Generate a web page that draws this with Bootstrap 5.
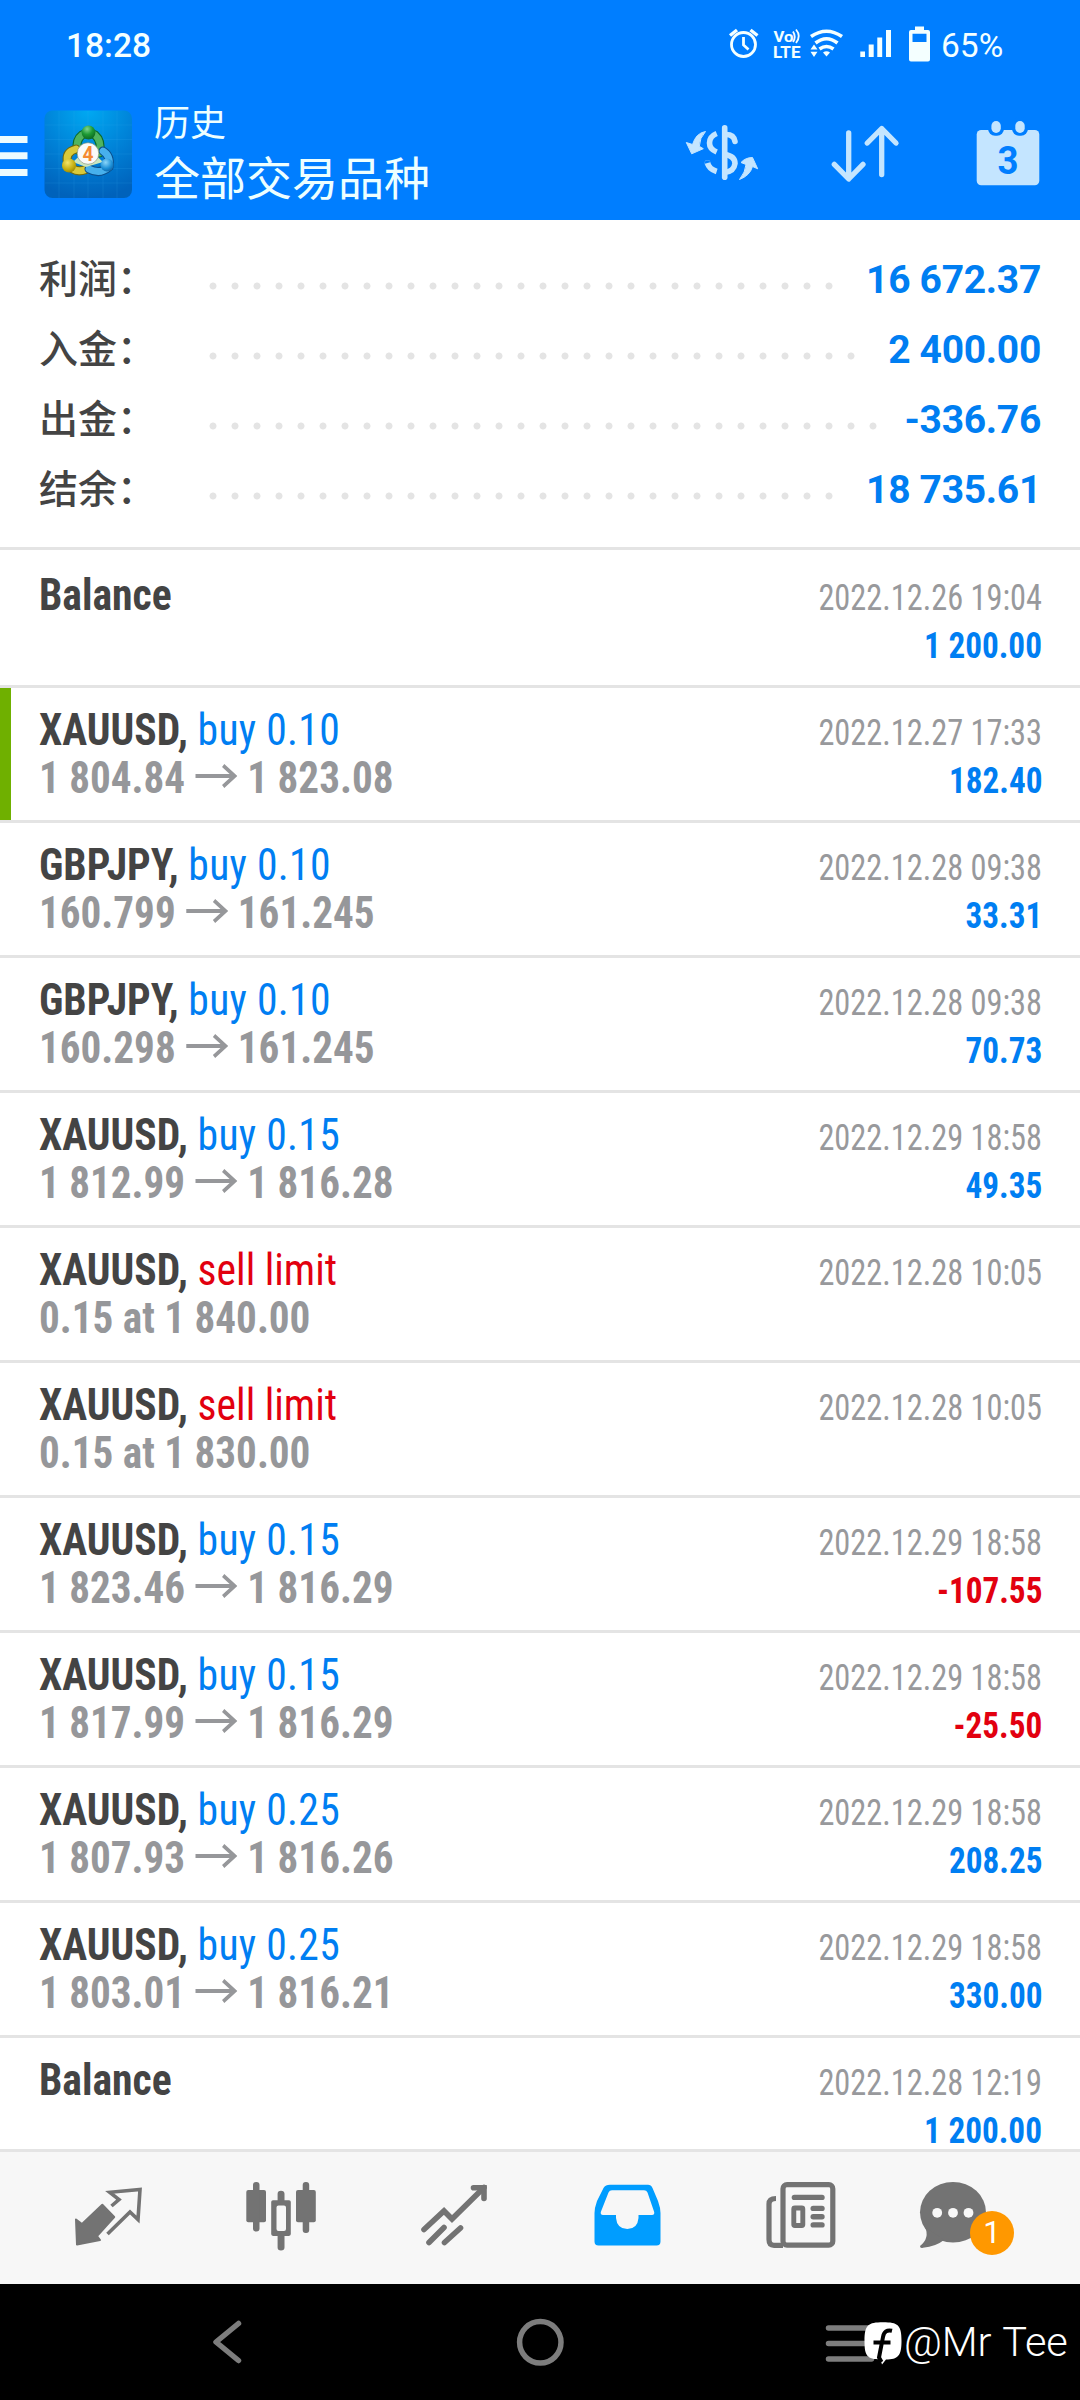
<!DOCTYPE html>
<html lang="zh-CN">
<head>
<meta charset="utf-8">
<meta name="viewport" content="width=device-width, initial-scale=1">
<title>历史</title>
<link rel="stylesheet" href="https://cdn.jsdelivr.net/npm/bootstrap@5.3.0/dist/css/bootstrap.min.css">
<style>
  body { font-family: Roboto, "Noto Sans CJK SC", sans-serif; width: 1080px; height: 2400px; overflow: hidden; background: #fff; }
  svg { display: block; flex: none; }
  .top-area { background: #007eff; height: 220px; }
  .status-bar { height: 88px; color: #f4ffff; font-size: 33.5px; font-weight: 500; line-height: 92px; padding-left: 66px; }
  .battery-text { width: 139px; font-weight: 450; }
  .app-bar { height: 132px; }
  .titles { color: #edffff; font-family: "Noto Sans CJK SC", sans-serif; margin-left: 22px; padding-top: 10px; }
  .title-sub { font-size: 36px; line-height: 44px; }
  .title-main { font-size: 46px; line-height: 60px; margin-top: 3px; }
  .summary { height: 327px; padding: 23px 39px 0 39px; }
  .sum-line { height: 70px; }
  .sum-label { width: 163px; font-family: "Noto Sans CJK SC", sans-serif; font-weight: 500; font-size: 39px; line-height: 66px; margin-bottom: 4px; color: #444; }
  .leader { height: 8px; margin-top: 16px; background: radial-gradient(circle at 11px 4px, #e4e4e4 3.1px, transparent 3.9px) 0 0 / 22px 8px repeat-x; }
  .dots-29 { width: 638px; } .dots-30 { width: 660px; } .dots-31 { width: 682px; }
  .sum-value { color: #007ef2; font-weight: 700; font-size: 39px; line-height: 70px; padding-top: 3px; letter-spacing: -.3px; white-space: pre; }
  .history { height: 1602px; overflow: hidden; }
  .deal { height: 135px; border-top: 3px solid #e4e4e4; padding: 18px 38px 0 39px; font-stretch: 75%; position: relative; }
  .deal-first { height: 138px; padding-top: 21px; }
  .deal-marked::before { content: ""; position: absolute; left: 0; top: 0; width: 11px; height: 132px; background: #6fb000; }
  .deal-line { height: 48px; line-height: 48px; white-space: pre; }
  .deal-line > span { display: inline-block; }
  .lead-text { font-size: 45px; transform: scaleX(.925); transform-origin: left; color: #444; font-weight: 700; }
  .lead-text .dir { font-weight: 400; letter-spacing: .3px; }
  .lead-text .sell-c { letter-spacing: 0; }
  .prices { color: #96979a; transform: scaleX(.914); }
  .prices svg { display: inline-block; vertical-align: 5px; margin: 0 11px; }
  .buy-c { color: #007ef2; } .sell-c { color: #e2000f; }
  .stamp { font-size: 36px; color: #98999c; transform: scaleX(.898); transform-origin: right; }
  .amount { font-size: 36px; font-weight: 700; transform: scaleX(.922); transform-origin: right; }
  .amount-alone { padding-top: 3px; }
  .tabs { height: 135px; border-top: 3px solid #e4e4e4; background: #f7f7f7; padding: 0 21px; color: #737373; }
  .tab-cell { position: relative; width: 173px; }
  .count-badge { left: 84px; top: 59px; width: 44px; height: 44px; border-radius: 50%; background: #ff9800; color: #fff; font-size: 31px; line-height: 44px; }
  .sys-nav { height: 116px; background: #000; position: relative; }
  .credit { left: 864px; top: 34px; color: #fff; }
  .credit span { font-size: 41.5px; font-weight: 350; line-height: 47px; margin-left: 2px; word-spacing: 2px; letter-spacing: -.2px; white-space: pre; }
</style>
</head>
<body>
<svg width="0" height="0" class="position-absolute">
  <symbol id="arrow" viewBox="0 0 46 24"><path d="M0 12H43M30.500 1.500L43 12L30.500 22.500" fill="none" stroke="#96979a" stroke-width="3.900"/></symbol>
</svg>

<header class="top-area">
  <div class="status-bar d-flex justify-content-between">
    <span>18:28</span>
    <div class="d-flex">
      <svg width="221" height="88" viewBox="720 0 221 88" fill="#f4ffff">
        <g fill="none" stroke="#f4ffff" stroke-width="2.800">
          <circle cx="743.500" cy="44.500" r="12"/><path d="M730 35.500L737 30M757.500 35.500L750.500 30" stroke-width="3.400"/><path d="M743.500 37V45L748.500 49.500"/>
        </g>
        <text x="773.500" y="42" font-size="14.500" font-weight="700" textLength="20" lengthAdjust="spacingAndGlyphs">Vo</text>
        <text x="773" y="57.500" font-size="16.500" font-weight="700" textLength="27.500" lengthAdjust="spacingAndGlyphs">LTE</text>
        <path d="M793 31.500Q796.500 37 793 42M796 29.500Q801.500 36 796 43" fill="none" stroke="#f4ffff" stroke-width="1.800"/>
        <g fill="none" stroke="#f4ffff" stroke-width="3.600"><path d="M811 36.500Q826.500 26 842 36.500"/><path d="M815.500 43Q826.500 34.500 837.500 43"/><path d="M819.500 49Q826.500 44 833.500 49"/></g>
        <path d="M823 52.500Q826.500 50 830 52.500L826.500 56.500ZM810.500 49.500L814 44.500L817.500 49.500ZM810.500 51.800H817.500L814 57Z"/>
        <path d="M860.300 51.500h4.700V57h-4.700zM868.700 44.500h5V57h-5zM877.300 37.500h4.900V57h-4.900zM886 30h5v27h-5z"/>
        <path fill-rule="evenodd" d="M911 30h4v-3.500h9V30h4q2 0 2 2v27.500q0 2-2 2h-17q-2 0-2-2V32q0-2 2-2zM912.500 33.700v8.400h14v-8.400z"/>
      </svg>
      <span class="battery-text">65%</span>
    </div>
  </div>
  <div class="app-bar d-flex">
    <svg width="132" height="132" viewBox="0 88 132 132">
      <defs>
        <radialGradient id="tile" cx=".5" cy="0" r="1"><stop offset="0" stop-color="#00a9f2"/><stop offset=".55" stop-color="#0080d6"/><stop offset="1" stop-color="#0062bb"/></radialGradient>
        <radialGradient id="gr" cx=".4" cy=".25" r=".8"><stop offset="0" stop-color="#7fd48c"/><stop offset=".5" stop-color="#1d9a35"/><stop offset="1" stop-color="#0b6320"/></radialGradient>
        <radialGradient id="ye" cx=".4" cy=".3" r=".8"><stop offset="0" stop-color="#f3e56a"/><stop offset=".6" stop-color="#c4ae10"/><stop offset="1" stop-color="#8d7c00"/></radialGradient>
        <radialGradient id="bl" cx=".4" cy=".3" r=".8"><stop offset="0" stop-color="#8ad6fa"/><stop offset=".6" stop-color="#1c8fd6"/><stop offset="1" stop-color="#0a5a9d"/></radialGradient>
      </defs>
      <path d="M0 136h27.500v7H0zM0 152.300h27.500v7H0zM0 169h27.500v7H0z" fill="#edfbff"/>
      <rect x="44.500" y="110.500" width="87.500" height="87.500" rx="8" fill="url(#tile)"/>
      <path d="M59 111v87M74 111v87M88 111v87M103 111v87M117 111v87M45 125h87M45 139.500h87M45 154h87M45 168.500h87M45 183h87" stroke="#3cb4f5" stroke-opacity=".15"/>
      <g fill="none" stroke-linecap="round">
        <path d="M77.500 150Q75.500 140 82 135Q88 131 95 135Q102 141 99.500 153" stroke="#0b6a2a" stroke-width="9"/>
        <path d="M77.500 150Q75.500 140 82 135Q88 131 95 135Q102 141 99.500 153" stroke="#4fb45f" stroke-width="6.800"/>
        <path d="M76 149Q65 152 67.500 163Q74 174 86 169.500" stroke="#6f6a10" stroke-width="9"/>
        <path d="M76 149Q65 152 67.500 163Q74 174 86 169.500" stroke="#d8c93a" stroke-width="6.800"/>
        <path d="M103 151Q111 156 109 167Q100 175 89 169" stroke="#0b4f8d" stroke-width="9"/>
        <path d="M103 151Q111 156 109 167Q100 175 89 169" stroke="#47b0ec" stroke-width="6.800"/>
      </g>
      <path d="M73 162L86 167L103 162L88 148Z" fill="#c9e6c0"/>
      <circle cx="88.500" cy="132.500" r="6.900" fill="url(#gr)"/><circle cx="69" cy="165.500" r="7" fill="url(#ye)"/><circle cx="107" cy="165" r="6.500" fill="url(#bl)"/>
      <circle cx="88" cy="153.500" r="10.800" fill="#fafafa" stroke="#7a8a6a" stroke-width=".6"/>
      <text x="88" y="161" font-size="20.500" font-weight="700" text-anchor="middle" textLength="11" lengthAdjust="spacingAndGlyphs" fill="#f58a33">4</text>
    </svg>
    <div class="titles flex-grow-1">
      <div class="title-sub">历史</div>
      <div class="title-main">全部交易品种</div>
    </div>
    <svg width="144" height="132" viewBox="648 88 144 132">
      <g fill="none" stroke="#c4e5ff" stroke-width="5.600">
        <path d="M724.700 127.700V177.300" stroke-linecap="round"/>
        <path d="M726 134.500Q734 134.500 735 141.500" stroke-linecap="round"/>
        <path d="M716.700 133.500Q709.500 136.500 709.500 143Q709.500 149 716.700 152"/>
        <path d="M724.700 154.500Q735 156 735 163.500Q734 171.500 724.700 172.500"/>
        <path d="M707.500 163Q709 169 716.700 171.500" /><circle cx="707.500" cy="163" r=".1" stroke-linecap="round"/>
      </g>
      <path d="M705.500 131.500Q696 133 692.500 144.500L686.300 142.500L691.700 153.800L703.300 148.700L699.300 146.300Q699.500 138 705.500 131.500Z" fill="#c4e5ff" stroke="#c4e5ff" stroke-linejoin="round"/>
      <path d="M739.500 179.500Q750 175.500 752.500 166.500L757.700 168.800L752.500 157.500Q745.500 157.500 741 162.500L746 164.500Q745.500 172 739.500 179.500Z" fill="#c4e5ff" stroke="#c4e5ff" stroke-linejoin="round"/>
    </svg>
    <svg width="144" height="132" viewBox="792 88 144 132">
      <path d="M848.700 133V178.500M834.300 164.300L848.700 179L863 164.300M881.700 174.500V129M867.300 143L881.700 128.500L896 143" fill="none" stroke="#c4e5ff" stroke-width="5.300" stroke-linecap="round" stroke-linejoin="round"/>
    </svg>
    <svg width="144" height="132" viewBox="936 88 144 132">
      <rect x="976.700" y="130" width="62.600" height="55.300" rx="4.500" fill="#c4e5ff"/>
      <rect x="988" y="117" width="16" height="18.700" rx="7" fill="#007eff"/><rect x="1012" y="117" width="16" height="18.700" rx="7" fill="#007eff"/>
      <rect x="991.400" y="121" width="9.400" height="12" rx="4.700" fill="#c4e5ff"/><rect x="1015.300" y="121" width="9.400" height="12" rx="4.700" fill="#c4e5ff"/>
      <text x="1008" y="173.500" font-size="39" font-weight="700" text-anchor="middle" textLength="21" lengthAdjust="spacingAndGlyphs" fill="#007eff">3</text>
    </svg>
  </div>
</header>

<section class="summary">
  <div class="sum-line d-flex align-items-center"><span class="sum-label">利润：</span><span class="leader dots-29"></span><span class="sum-value ms-auto">16 672.37</span></div>
  <div class="sum-line d-flex align-items-center"><span class="sum-label">入金：</span><span class="leader dots-30"></span><span class="sum-value ms-auto">2 400.00</span></div>
  <div class="sum-line d-flex align-items-center"><span class="sum-label">出金：</span><span class="leader dots-31"></span><span class="sum-value ms-auto">-336.76</span></div>
  <div class="sum-line d-flex align-items-center"><span class="sum-label">结余：</span><span class="leader dots-29"></span><span class="sum-value ms-auto">18 735.61</span></div>
</section>

<main class="history">
  <article class="deal deal-first">
    <div class="deal-line d-flex justify-content-between align-items-baseline"><span class="lead-text">Balance</span><span class="stamp">2022.12.26 19:04</span></div>
    <div class="deal-line d-flex justify-content-end align-items-baseline"><span class="amount amount-alone buy-c">1 200.00</span></div>
  </article>
  <article class="deal deal-marked">
    <div class="deal-line d-flex justify-content-between align-items-baseline"><span class="lead-text">XAUUSD, <span class="dir buy-c">buy 0.10</span></span><span class="stamp">2022.12.27 17:33</span></div>
    <div class="deal-line d-flex justify-content-between align-items-baseline"><span class="lead-text prices">1 804.84<svg width="46" height="24"><use href="#arrow"/></svg>1 823.08</span><span class="amount buy-c">182.40</span></div>
  </article>
  <article class="deal">
    <div class="deal-line d-flex justify-content-between align-items-baseline"><span class="lead-text">GBPJPY, <span class="dir buy-c">buy 0.10</span></span><span class="stamp">2022.12.28 09:38</span></div>
    <div class="deal-line d-flex justify-content-between align-items-baseline"><span class="lead-text prices">160.799<svg width="46" height="24"><use href="#arrow"/></svg>161.245</span><span class="amount buy-c">33.31</span></div>
  </article>
  <article class="deal">
    <div class="deal-line d-flex justify-content-between align-items-baseline"><span class="lead-text">GBPJPY, <span class="dir buy-c">buy 0.10</span></span><span class="stamp">2022.12.28 09:38</span></div>
    <div class="deal-line d-flex justify-content-between align-items-baseline"><span class="lead-text prices">160.298<svg width="46" height="24"><use href="#arrow"/></svg>161.245</span><span class="amount buy-c">70.73</span></div>
  </article>
  <article class="deal">
    <div class="deal-line d-flex justify-content-between align-items-baseline"><span class="lead-text">XAUUSD, <span class="dir buy-c">buy 0.15</span></span><span class="stamp">2022.12.29 18:58</span></div>
    <div class="deal-line d-flex justify-content-between align-items-baseline"><span class="lead-text prices">1 812.99<svg width="46" height="24"><use href="#arrow"/></svg>1 816.28</span><span class="amount buy-c">49.35</span></div>
  </article>
  <article class="deal">
    <div class="deal-line d-flex justify-content-between align-items-baseline"><span class="lead-text">XAUUSD, <span class="dir sell-c">sell limit</span></span><span class="stamp">2022.12.28 10:05</span></div>
    <div class="deal-line d-flex justify-content-between align-items-baseline"><span class="lead-text prices">0.15 at 1 840.00</span></div>
  </article>
  <article class="deal">
    <div class="deal-line d-flex justify-content-between align-items-baseline"><span class="lead-text">XAUUSD, <span class="dir sell-c">sell limit</span></span><span class="stamp">2022.12.28 10:05</span></div>
    <div class="deal-line d-flex justify-content-between align-items-baseline"><span class="lead-text prices">0.15 at 1 830.00</span></div>
  </article>
  <article class="deal">
    <div class="deal-line d-flex justify-content-between align-items-baseline"><span class="lead-text">XAUUSD, <span class="dir buy-c">buy 0.15</span></span><span class="stamp">2022.12.29 18:58</span></div>
    <div class="deal-line d-flex justify-content-between align-items-baseline"><span class="lead-text prices">1 823.46<svg width="46" height="24"><use href="#arrow"/></svg>1 816.29</span><span class="amount sell-c">-107.55</span></div>
  </article>
  <article class="deal">
    <div class="deal-line d-flex justify-content-between align-items-baseline"><span class="lead-text">XAUUSD, <span class="dir buy-c">buy 0.15</span></span><span class="stamp">2022.12.29 18:58</span></div>
    <div class="deal-line d-flex justify-content-between align-items-baseline"><span class="lead-text prices">1 817.99<svg width="46" height="24"><use href="#arrow"/></svg>1 816.29</span><span class="amount sell-c">-25.50</span></div>
  </article>
  <article class="deal">
    <div class="deal-line d-flex justify-content-between align-items-baseline"><span class="lead-text">XAUUSD, <span class="dir buy-c">buy 0.25</span></span><span class="stamp">2022.12.29 18:58</span></div>
    <div class="deal-line d-flex justify-content-between align-items-baseline"><span class="lead-text prices">1 807.93<svg width="46" height="24"><use href="#arrow"/></svg>1 816.26</span><span class="amount buy-c">208.25</span></div>
  </article>
  <article class="deal">
    <div class="deal-line d-flex justify-content-between align-items-baseline"><span class="lead-text">XAUUSD, <span class="dir buy-c">buy 0.25</span></span><span class="stamp">2022.12.29 18:58</span></div>
    <div class="deal-line d-flex justify-content-between align-items-baseline"><span class="lead-text prices">1 803.01<svg width="46" height="24"><use href="#arrow"/></svg>1 816.21</span><span class="amount buy-c">330.00</span></div>
  </article>
  <article class="deal">
    <div class="deal-line d-flex justify-content-between align-items-baseline"><span class="lead-text">Balance</span><span class="stamp">2022.12.28 12:19</span></div>
    <div class="deal-line d-flex justify-content-end align-items-baseline"><span class="amount amount-alone buy-c">1 200.00</span></div>
  </article>
</main>

<nav class="tabs d-flex">
  <div class="tab-cell">
    <svg width="173" height="132" viewBox="21 2152 173 132">
      <path d="M76 2219.500L82 2224L102.300 2204.800L114.200 2217L97 2236L100 2240L77 2244.500Z" fill="#737373" stroke="#737373" stroke-width="2" stroke-linejoin="round"/>
      <path d="M111.500 2206L119 2199.500L109.800 2192.300L140 2189.500L138 2219.500L130 2212L107.500 2234" fill="none" stroke="#737373" stroke-width="3.600"/>
    </svg>
  </div>
  <div class="tab-cell">
    <svg width="173" height="132" viewBox="194 2152 173 132" fill="#737373">
      <rect x="246.300" y="2190" width="19.700" height="32.300" rx="2"/><rect x="253" y="2182" width="6.500" height="49.500" rx="3"/>
      <rect x="296" y="2190" width="19.800" height="32.300" rx="2"/><rect x="302.700" y="2182" width="6.500" height="51" rx="3"/>
      <path fill-rule="evenodd" d="M273 2200.300h4.600v-6.500q0-3 3.400-3t3.500 3v6.500h4.500q1.800 0 1.800 1.800v32q0 1.800-1.800 1.800h-4.500v11.500q0 3-3.500 3t-3.400-3v-11.500h-4.600q-1.800 0-1.800-1.800v-32q0-1.800 1.800-1.800zM278.500 2205.500q-2 0-2 2v21.500q0 2 2 2h5.500q2 0 2-2v-21.500q0-2-2-2z"/>
    </svg>
  </div>
  <div class="tab-cell">
    <svg width="173" height="132" viewBox="367 2152 173 132">
      <g fill="none" stroke="#737373" stroke-width="5.600" stroke-linecap="round"><path d="M424 2229.500L444 2211L452 2219L484 2187.500"/><path d="M473.500 2187.700H484V2198.500"/><path d="M429 2242.500L444 2227.500M444.500 2242.500L460.500 2228"/></g>
    </svg>
  </div>
  <div class="tab-cell">
    <svg width="173" height="132" viewBox="540 2152 173 132">
      <path fill="#009dff" fill-rule="evenodd" d="M610 2184.700H648Q651 2184.700 652.500 2188L658 2201Q660.500 2208 660.500 2213V2241.500Q660.500 2245.500 656.500 2245.500H598.500Q594.500 2245.500 594.500 2241.500V2213Q594.500 2208 597 2201L603.500 2188Q605.500 2184.700 610 2184.700ZM612 2190.300Q609.500 2190.300 608.500 2192.500L600.800 2212Q600.300 2215 603 2215H616V2218Q617 2229 627.300 2229Q637.500 2229 638.500 2218V2215H652Q654.700 2215 654.200 2212L647.500 2192.500Q646.500 2190.300 644 2190.300Z"/>
    </svg>
  </div>
  <div class="tab-cell">
    <svg width="173" height="132" viewBox="713 2152 173 132">
      <g fill="none" stroke="#737373" stroke-width="5.200"><rect x="783" y="2184.700" width="49.800" height="60.500" rx="4"/><path d="M776 2198.500Q769 2198.500 769 2204V2239.500Q769 2245.300 774 2245.300H783"/><rect x="793.800" y="2208" width="9" height="17.500" rx="1" stroke-width="4.900"/></g>
      <g fill="#737373"><rect x="791.700" y="2194.700" width="33" height="5.400" rx="2.700"/><rect x="810.500" y="2205.700" width="14.200" height="5.400" rx="2.700"/><rect x="810.500" y="2214" width="14.200" height="5.400" rx="2.700"/><rect x="810.500" y="2222.200" width="14.200" height="5.400" rx="2.700"/></g>
    </svg>
  </div>
  <div class="tab-cell">
    <svg width="173" height="132" viewBox="886 2152 173 132">
      <ellipse cx="953" cy="2212.300" rx="33" ry="30.300" fill="#737373"/>
      <path d="M925 2227Q930 2238 920 2246Q920 2248.500 923 2247.700Q936 2246.500 944 2240Z" fill="#737373"/>
      <g fill="#f7f7f7"><circle cx="937.200" cy="2212.800" r="4.900"/><circle cx="953" cy="2212.800" r="4.900"/><circle cx="968.500" cy="2212.800" r="4.900"/></g>
    </svg>
    <span class="count-badge position-absolute text-center">1</span>
  </div>
</nav>

<footer class="sys-nav">
  <svg width="1080" height="116" viewBox="0 2284 1080 116" fill="none" stroke="#7d7d7d" stroke-width="5.500" stroke-linecap="round" stroke-linejoin="round">
    <path d="M238.500 2323.500L216 2342L238.500 2360.500"/>
    <circle cx="540.300" cy="2342.300" r="20.700"/>
    <path d="M828.500 2328H871.500M828.500 2343.500H871.500M828.500 2359H871.500"/>
  </svg>
  <div class="credit position-absolute d-flex">
    <svg width="38" height="48" viewBox="864 2318 38 48">
      <path d="M883 2322.300C898 2322.300 901.500 2325 901.500 2341C901.500 2356 898 2359.300 886 2359.500L882 2364.500L880.500 2359.500C867 2359 864.500 2356 864.500 2341C864.500 2325 868 2322.300 883 2322.300Z" fill="#fff"/>
      <path d="M892 2330.800Q884.500 2329 883 2337L879 2357.500L881.500 2362M873.500 2342.500H890.500" fill="none" stroke="#000" stroke-width="4"/>
    </svg>
    <span>@Mr Tee</span>
  </div>
</footer>
<script src="https://cdn.jsdelivr.net/npm/bootstrap@5.3.0/dist/js/bootstrap.bundle.min.js"></script>
</body>
</html>
